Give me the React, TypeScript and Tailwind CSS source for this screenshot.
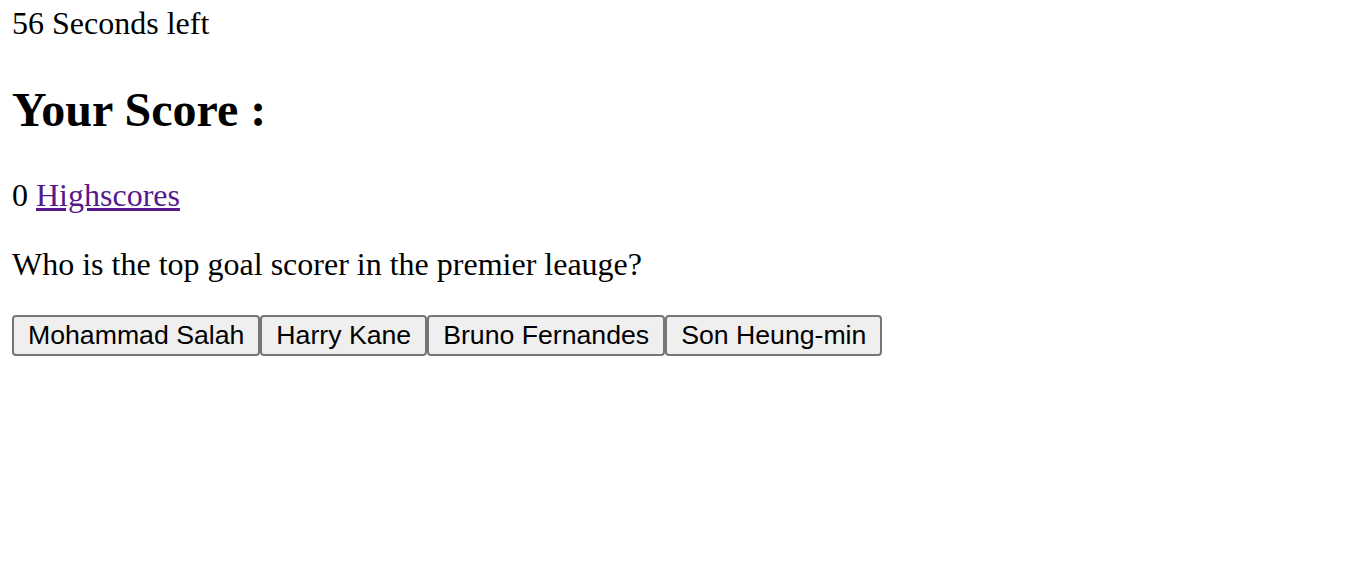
const answers = ["Mohammad Salah", "Harry Kane", "Bruno Fernandes", "Son Heung-min"];

export default function App() {
  return (
    <div className="px-3 pt-[5px] font-['Liberation_Serif','Times_New_Roman',serif] text-[32px] leading-[normal] text-black bg-white min-h-[570px]">
      <div>56 Seconds left</div>
      <h2 className="text-[48px] font-bold my-[40px]">Your Score :</h2>
      <p className="my-8">
        0{" "}
        <a href="#" className="text-[#551a8b] underline">
          Highscores
        </a>
      </p>
      <p className="my-8">Who is the top goal scorer in the premier leauge?</p>
      <div className="flex">
        {answers.map((a) => (
          <button
            key={a}
            className="font-['Liberation_Sans',Arial,sans-serif] text-[26.67px] leading-[31px] text-black bg-[#efefef] border-2 border-[#767676] rounded-[4px] px-[14px] py-[3px]"
          >
            {a}
          </button>
        ))}
      </div>
    </div>
  );
}
